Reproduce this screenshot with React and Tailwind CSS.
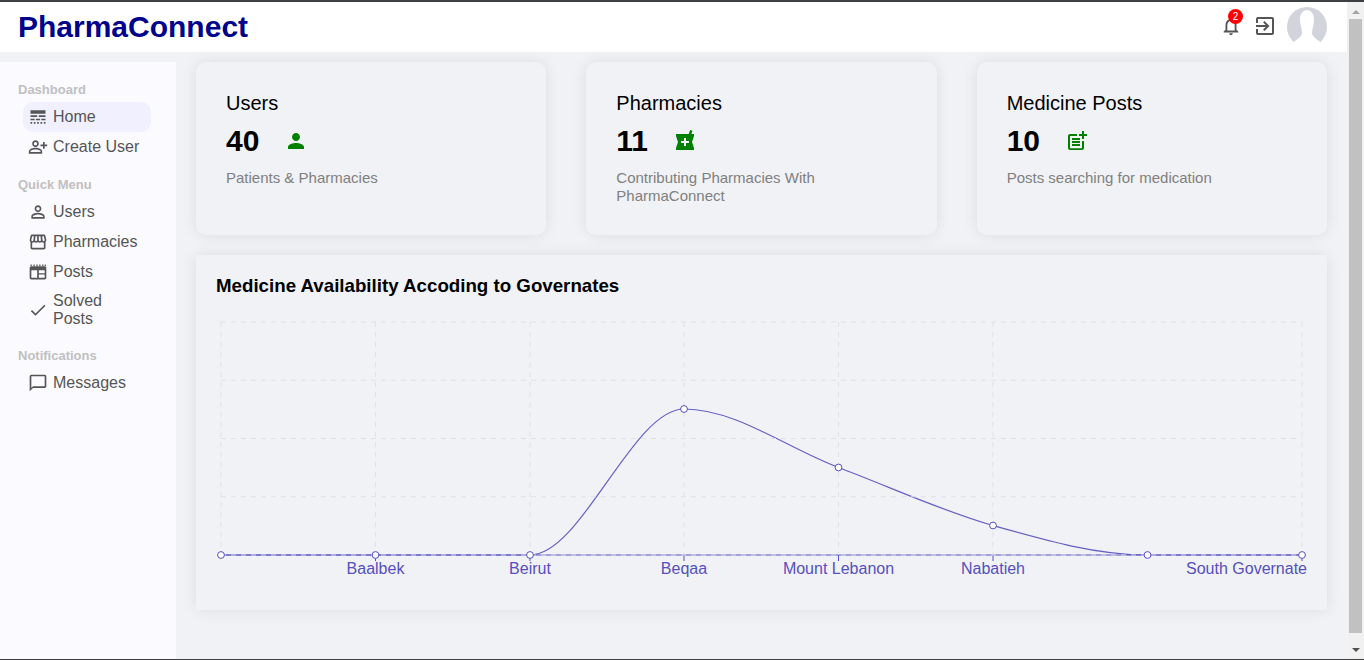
import {
  MdCheck,
  MdChatBubbleOutline,
  MdLineStyle,
  MdLocalPharmacy,
  MdOutlineExitToApp,
  MdOutlineNotifications,
  MdOutlinePersonAddAlt,
  MdOutlinePostAdd,
  MdOutlineStorefront,
  MdPerson,
  MdPersonOutline,
} from "react-icons/md";

function PostsIcon({ size, className }) {
  return (
    <svg viewBox="0 0 24 24" width={size} height={size} className={className} fill="currentColor">
      <path
        fillRule="evenodd"
        d="M4 5h16a2 2 0 0 1 2 2v12a2 2 0 0 1-2 2H4a2 2 0 0 1-2-2V7a2 2 0 0 1 2-2zm0 5v9h7v-9H4zm9 0v3.5h7V10h-7zm0 5v4h7v-4h-7z"
      />
      <path d="M3 3h1.5v2H3zM6.5 3H8v2H6.5zM10 3h1.5v2H10zM13.5 3H15v2h-1.5zM17 3h1.5v2H17zM20 3h1.5v2H20z" />
    </svg>
  );
}

const MENU = [
  {
    title: "Dashboard",
    items: [
      { label: "Home", icon: MdLineStyle, active: true },
      { label: "Create User", icon: MdOutlinePersonAddAlt },
    ],
  },
  {
    title: "Quick Menu",
    items: [
      { label: "Users", icon: MdPersonOutline },
      { label: "Pharmacies", icon: MdOutlineStorefront },
      { label: "Posts", icon: PostsIcon },
      { label: "Solved\nPosts", icon: MdCheck },
    ],
  },
  {
    title: "Notifications",
    items: [{ label: "Messages", icon: MdChatBubbleOutline }],
  },
];

const CARDS = [
  { title: "Users", count: 40, icon: MdPerson, sub: "Patients & Pharmacies" },
  {
    title: "Pharmacies",
    count: 11,
    icon: MdLocalPharmacy,
    sub: "Contributing Pharmacies With PharmaConnect",
  },
  {
    title: "Medicine Posts",
    count: 10,
    icon: MdOutlinePostAdd,
    sub: "Posts searching for medication",
  },
];

const POINT_X = [221, 375.5, 530, 684, 838.5, 993, 1147.5, 1302];
const POINT_Y = [555, 555, 555, 409, 467.5, 525.5, 555, 555];
const GRID_X = [221, 375.5, 530, 684, 838.5, 993, 1302];
const GRID_Y = [322, 380.25, 438.5, 496.75, 555];
const TICK_X = [375.5, 530, 684, 838.5, 993, 1302];
const LABELS = [
  { x: 375.5, text: "Baalbek" },
  { x: 530, text: "Beirut" },
  { x: 684, text: "Beqaa" },
  { x: 838.5, text: "Mount Lebanon" },
  { x: 993, text: "Nabatieh" },
  { x: 1307, text: "South Governate", anchor: "end" },
];

function Chart() {
  return (
    <svg viewBox="196 310 1131 280" className="block h-[280px] w-full">
      <line x1={221} x2={1302} y1={555} y2={555} stroke="#5550bd" />
      {TICK_X.map((x) => (
        <line key={x} x1={x} x2={x} y1={555} y2={561} stroke="#5550bd" />
      ))}
      <path
        d="M221 555L530 555C581.5 555 632.6 409 684 409C735.5 409 787 448.1 838.5 467.5C890 486.9 941.5 510.9 993 525.5C1044.5 540.1 1096 555 1147.5 555L1302 555"
        fill="none"
        stroke="#5550bd"
        strokeWidth={1.2}
        strokeOpacity={0.9}
      />
      {GRID_Y.map((y) => (
        <line key={y} x1={221} x2={1302} y1={y} y2={y} stroke="#dfe1e6" strokeDasharray="5 5" />
      ))}
      {GRID_X.map((x) => (
        <line key={x} x1={x} x2={x} y1={322} y2={555} stroke="#dfe1e6" strokeDasharray="5 5" />
      ))}
      {POINT_X.map((x, i) => (
        <circle key={x} cx={x} cy={POINT_Y[i]} r={3.4} fill="#fff" stroke="#5550bd" />
      ))}
      {LABELS.map((l) => (
        <text
          key={l.text}
          x={l.x}
          y={574}
          textAnchor={l.anchor ?? "middle"}
          fill="#5550bd"
          fontSize={16}
        >
          {l.text}
        </text>
      ))}
    </svg>
  );
}

function Sidebar() {
  return (
    <aside className="w-[176px] shrink-0 bg-[#fbfbff] pl-[18px] pr-[25px] pt-[20px]">
      {MENU.map((group) => (
        <div key={group.title} className="mb-[15px]">
          <h3 className="text-[13px] leading-[16px] font-bold text-[#c0c0c0]">{group.title}</h3>
          <ul className="ml-[5px] mt-[4px]">
            {group.items.map((item) => {
              const Icon = item.icon;
              return (
                <li
                  key={item.label}
                  className={`flex items-center gap-[5px] rounded-[10px] p-[5px] text-[16px] leading-[18px] whitespace-pre-line text-[#555] ${
                    item.active ? "bg-[#f0f0ff]" : ""
                  }`}
                >
                  <Icon size={20} className="shrink-0" />
                  <span>{item.label}</span>
                </li>
              );
            })}
          </ul>
        </div>
      ))}
    </aside>
  );
}

export default function App() {
  return (
    <div className="flex h-[660px] flex-col overflow-hidden border-t-2 border-b border-[#3c4043] bg-[#f1f2f6] font-['Liberation_Sans',Arial,sans-serif]">
      <div className="flex min-h-0 flex-1">
        <div className="flex min-w-0 flex-1 flex-col">
          <header className="flex h-[50px] shrink-0 items-center justify-between bg-white pl-[18px] pr-[20px]">
            <span className="pb-[2px] text-[30px] font-bold text-[#00008b]">PharmaConnect</span>
            <div className="flex items-center">
              <div className="relative mb-[3px] text-[#555]">
                <MdOutlineNotifications size={22} className="block" />
                <span className="absolute -top-[6px] right-[-1px] flex h-[15px] w-[15px] items-center justify-center rounded-full bg-[#f00] text-[10px] text-white">
                  2
                </span>
              </div>
              <MdOutlineExitToApp size={24} className="mb-[2px] ml-[11px] text-[#555]" />
              <svg viewBox="0 0 40 40" className="ml-[10px] h-[40px] w-[40px]">
                <circle cx="20" cy="20" r="20" fill="#d1d5db" />
                <path d="M20 3c4 0 7 4 7 9 0 6-2 10-2 14 0 3 5 7 10 10L30 40H10L5 36c5-3 10-7 10-10 0-4-2-8-2-14 0-5 3-9 7-9z" fill="#fff" />
              </svg>
            </div>
          </header>
          <div className="flex min-h-0 flex-1 pt-[10px]">
            <Sidebar />
            <main className="min-w-0 flex-1 pl-[20px] pr-[20px]">
              <div className="grid grid-cols-3 gap-[40px]">
                {CARDS.map((card) => {
                  const Icon = card.icon;
                  return (
                    <div
                      key={card.title}
                      className="h-[173px] rounded-[10px] bg-[#f1f2f6] p-[30px] shadow-[0_0_15px_0_rgba(0,0,0,0.09)]"
                    >
                      <div className="text-[20px] leading-[23px] text-black">{card.title}</div>
                      <div className="mt-[9px] flex items-center">
                        <span className="text-[30px] leading-[34px] font-bold text-black">{card.count}</span>
                        <Icon size={24} className="ml-[25px] text-[#008000]" />
                      </div>
                      <p className="mt-[11px] text-[15px] leading-[18px] text-[#808080]">{card.sub}</p>
                    </div>
                  );
                })}
              </div>
              <section className="mt-[20px] h-[355px] bg-[#f1f2f6] shadow-[0_0_15px_0_rgba(0,0,0,0.09)]">
                <h3 className="px-[20px] pt-[20px] text-[18.72px] leading-[21px] font-bold text-black">
                  Medicine Availability Accoding to Governates
                </h3>
                <div className="mt-[14px]">
                  <Chart />
                </div>
              </section>
            </main>
          </div>
        </div>
        <div className="flex w-[17px] shrink-0 flex-col items-center bg-[#f1f1f1]">
          <span className="mt-[8px] h-0 w-0 border-x-[4px] border-b-[4px] border-x-transparent border-b-[#a3a3a3]" />
          <div className="mt-[5px] w-[13px] flex-1 bg-[#c1c1c1]" />
          <span className="mb-[7px] mt-[15px] h-0 w-0 border-x-[4px] border-t-[4px] border-x-transparent border-t-[#505050]" />
        </div>
      </div>
    </div>
  );
}
